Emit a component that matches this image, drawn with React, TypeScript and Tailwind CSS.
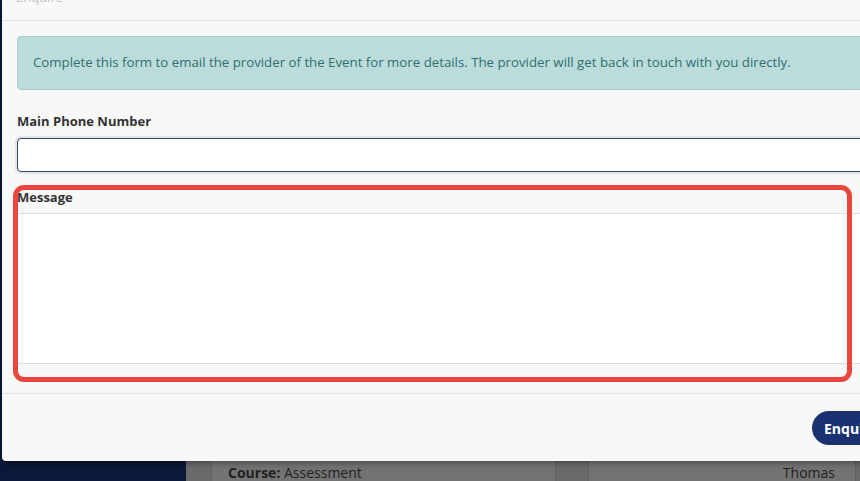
import React from "react";

const FONT = { fontFamily: '"Open Sans", "Noto Sans", sans-serif' };

function Background() {
  return (
    <div className="flex h-full w-full">
      <div className="w-[186px] shrink-0 bg-[#0b1838]" />
      <div className="flex flex-1 items-end gap-[32px] bg-[#6a6a6a] px-[25px]">
        <div className="h-[30px] w-[345px] border-x border-[#5f5f5f] bg-[#737373] px-[16px] pt-[12px] text-[14px] leading-[20px] text-[#1f1f1f]">
          <span className="font-bold">Course:</span> Assessment
        </div>
        <div className="h-[30px] w-[268px] border-x border-[#5f5f5f] bg-[#737373] pr-[20px] pt-[12px] text-right text-[14px] leading-[20px] text-[#1f1f1f]">
          Thomas
        </div>
      </div>
    </div>
  );
}

function Modal() {
  return (
    <div className="absolute left-[2px] top-0 flex h-[461px] w-[900px] flex-col rounded-bl-[4px] bg-[#f8f8f8] shadow-[0_2px_6px_rgba(0,0,0,0.35)]">
      <div className="relative h-[21px] shrink-0 border-b border-[#e4e4e4]">
        <span className="absolute left-[14px] top-[-12px] text-[13px] text-[#c4c4c4]">Enquire</span>
      </div>

      <div className="relative flex-1 px-[15px] pt-[15px]">
        <div className="flex h-[54px] items-center rounded-[4px] border border-[#a8d0d0] bg-[#bcdcdc] px-[15px] text-[13.25px] text-[#2e6f6e]">
          Complete this form to email the provider of the Event for more details. The provider will get back in touch with you directly.
        </div>

        <label className="mt-[22px] block text-[13px] font-bold text-[#333]">Main Phone Number</label>
        <input
          className="mt-[6px] block h-[34px] w-full rounded-[4px] border border-[#3a4656] bg-white shadow-[0_0_0_2px_rgba(200,210,235,0.5)] outline-none"
          type="text"
        />

        <label className="mt-[16px] block text-[13px] font-bold text-[#333]">Message</label>
        <textarea className="mt-[6px] block h-[151px] w-full resize-none border-y border-[#dcdcdc] bg-white outline-none" />

        <div className="pointer-events-none absolute left-[11px] top-[164px] h-[197px] w-[839px] rounded-[11px] border-[5px] border-[#e9463d]" />
      </div>

      <div className="flex h-[68px] shrink-0 items-start border-t border-[#e4e4e4] pl-[810px] pt-[17px]">
        <button className="h-[34px] rounded-full bg-[#1a3172] px-[12px] text-[14px] font-bold text-white">
          Enquire
        </button>
      </div>
    </div>
  );
}

export default function App() {
  return (
    <div className="relative h-[481px] w-[860px] overflow-hidden" style={FONT}>
      <Background />
      <Modal />
    </div>
  );
}
